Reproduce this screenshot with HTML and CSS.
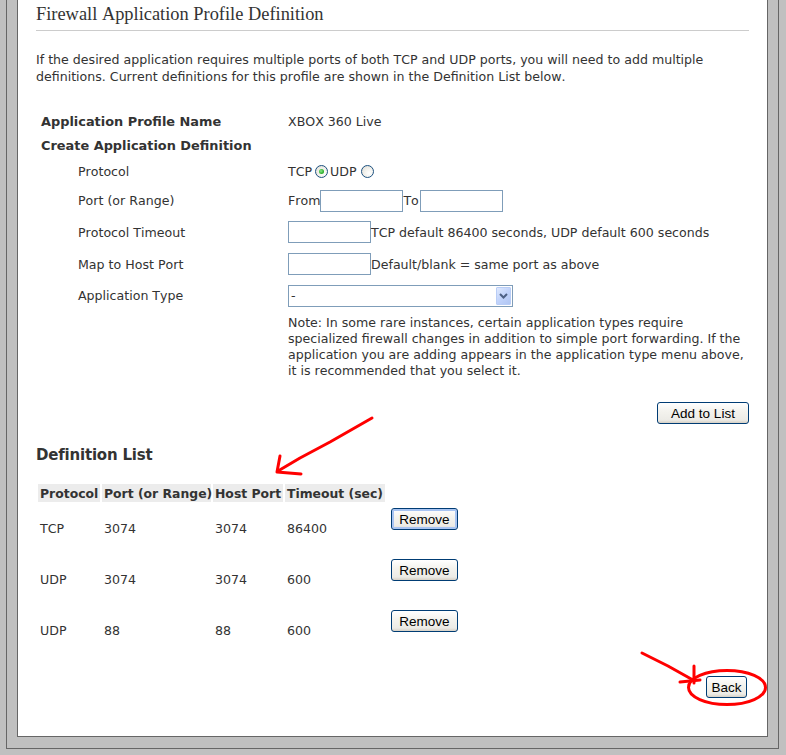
FILE: index.html
```html
<!DOCTYPE html>
<html lang="en">
<head>
    <meta charset="UTF-8">
    <meta name="viewport" content="width=device-width, initial-scale=1.0">
    <title>Firewall Application Profile Definition</title>
    <link rel="stylesheet" href="styles.css">
</head>
<body>
    <div class="frame">
        <div class="panel">
            <h1 class="title">Firewall Application Profile Definition</h1>
            <p class="intro">If the desired application requires multiple ports of both TCP and UDP ports, you will need to add multiple<br>definitions. Current definitions for this profile are shown in the Definition List below.</p>

            <form class="form" id="defForm">
                <div class="row r-name">
                    <span class="label">Application Profile Name</span>
                    <span class="value">XBOX 360 Live</span>
                </div>
                <div class="row r-create">
                    <span class="label">Create Application Definition</span>
                </div>
                <div class="row r-proto">
                    <span class="label sub">Protocol</span>
                    <span class="value">TCP<input type="radio" name="proto" class="radio" checked>UDP<input type="radio" name="proto" class="radio radio-last"></span>
                </div>
                <div class="row r-port">
                    <span class="label sub">Port (or Range)</span>
                    <span class="value">From<input type="text" class="field">To<input type="text" class="field field-to"></span>
                </div>
                <div class="row r-timeout">
                    <span class="label sub">Protocol Timeout</span>
                    <span class="value"><input type="text" class="field">TCP default 86400 seconds, UDP default 600 seconds</span>
                </div>
                <div class="row r-map">
                    <span class="label sub">Map to Host Port</span>
                    <span class="value"><input type="text" class="field">Default/blank = same port as above</span>
                </div>
                <div class="row r-type">
                    <span class="label sub">Application Type</span>
                    <span class="value">
                        <span class="combo">
                            <select class="select">
                                <option>-</option>
                            </select>
                            <span class="combo-btn">
                                <svg width="9" height="6" viewBox="0 0 9 6"><path d="M1 1 L4.5 4.5 L8 1" fill="none" stroke="#4d6185" stroke-width="2"/></svg>
                            </span>
                        </span>
                    </span>
                </div>
            </form>

            <p class="note">Note: In some rare instances, certain application types require<br>specialized firewall changes in addition to simple port forwarding. If the<br>application you are adding appears in the application type menu above,<br>it is recommended that you select it.</p>

            <div class="actions">
                <button type="button" class="btn btn-add">Add to List</button>
            </div>

            <h2 class="heading">Definition List</h2>

            <table class="defs">
                <colgroup>
                    <col class="c-proto">
                    <col class="c-port">
                    <col class="c-host">
                    <col class="c-time">
                    <col class="c-act">
                </colgroup>
                <thead>
                    <tr>
                        <th>Protocol</th>
                        <th>Port (or Range)</th>
                        <th>Host Port</th>
                        <th>Timeout (sec)</th>
                        <th class="blank"></th>
                    </tr>
                </thead>
                <tbody id="defRows"></tbody>
            </table>

            <div class="actions back-row">
                <button type="button" class="btn btn-back">Back</button>
            </div>
        </div>
    </div>

    <svg class="marks" width="786" height="755" viewBox="0 0 786 755">
        <g fill="none" stroke="#ff0000" stroke-width="3" stroke-linecap="round" stroke-linejoin="round">
            <path d="M372 418 L330 442 L300 458 L278 471"/>
            <path d="M280 456 L277 472 L301 474"/>
            <path d="M642 653 L668 666 L693 680"/>
            <path d="M694 666 L694 683"/>
            <path d="M680 682 L700 680"/>
            <ellipse cx="727" cy="687.5" rx="38.5" ry="17"/>
        </g>
    </svg>

    <script>
        const defRows = document.getElementById('defRows');
        const definitions = [
            { protocol: 'TCP', port: '3074', host: '3074', timeout: '86400' },
            { protocol: 'UDP', port: '3074', host: '3074', timeout: '600' },
            { protocol: 'UDP', port: '88', host: '88', timeout: '600' }
        ];

        function renderDefinitions() {
            defRows.innerHTML = '';
            definitions.forEach((def, index) => {
                const row = defRows.insertRow();
                row.innerHTML = `
                    <td>${def.protocol}</td>
                    <td>${def.port}</td>
                    <td>${def.host}</td>
                    <td>${def.timeout}</td>
                    <td class="act"><button type="button" class="btn btn-remove${index === 0 ? ' is-focus' : ''}">Remove</button></td>
                `;
            });
        }

        renderDefinitions();
    </script>
</body>
</html>
```

FILE: styles.css
```css
body {
    margin: 0;
    background-color: #c0c0c0;
    font-family: "DejaVu Sans", Verdana, sans-serif;
    font-size: 12.6px;
    font-kerning: none;
    color: #333;
}
.frame {
    margin: 0 7px 0 6px;
    padding: 0 10px 11px 10px;
    border: 1px solid #666;
    border-top: none;
}
.panel {
    background-color: #fff;
    border: 1px solid #666;
    border-top: none;
    padding: 5px 18px 38px 18px;
}
.title {
    margin: 0;
    padding: 0 0 6px 0;
    border-bottom: 1px solid #ccc;
    font-family: "Liberation Serif", "Times New Roman", serif;
    font-size: 18.4px;
    font-weight: normal;
    line-height: 19px;
    color: #333;
}
.intro {
    margin: 20px 0 0 0;
    line-height: 17px;
}
.form {
    margin: 24px 0 0 5px;
}
.row {
    display: flex;
    align-items: center;
    line-height: 17px;
}
.label {
    width: 247px;
    flex: none;
    font-weight: bold;
    font-size: 12.9px;
}
.label.sub {
    font-weight: normal;
    font-size: 12.6px;
    padding-left: 37px;
    box-sizing: border-box;
}
.value {
    display: flex;
    align-items: center;
    white-space: nowrap;
}
.r-name { height: 24px; }
.r-create { height: 25px; }
.r-proto { height: 27px; }
.r-port { height: 31px; }
.r-timeout { height: 32px; }
.r-map { height: 32px; }
.r-type { height: 31px; }

.radio {
    appearance: none;
    -webkit-appearance: none;
    width: 13px;
    height: 13px;
    margin: 0 2px 0 3px;
    border: 1px solid #1c5180;
    border-radius: 50%;
    box-sizing: border-box;
    background: radial-gradient(circle at 65% 65%, #fff 0, #f2f1ec 45%, #dcd9d1 100%);
    position: relative;
}
.radio:checked::after {
    content: "";
    position: absolute;
    left: 3px;
    top: 3px;
    width: 5px;
    height: 5px;
    border-radius: 50%;
    background: radial-gradient(circle at 40% 40%, #8ce78c 0, #2fb12f 60%, #1d8d1d 100%);
}
.radio-last {
    margin-left: 4px;
}
.field {
    width: 83px;
    height: 22px;
    box-sizing: border-box;
    margin: 0;
    border: 1px solid #7f9db9;
    padding: 0 2px;
    font: inherit;
    background: #fff;
}
.field-to {
    margin-left: 1px;
}
.combo {
    position: relative;
    display: inline-block;
    width: 225px;
    height: 22px;
}
.select {
    appearance: none;
    -webkit-appearance: none;
    width: 225px;
    height: 22px;
    box-sizing: border-box;
    margin: 0;
    border: 1px solid #7f9db9;
    border-radius: 0;
    padding: 0 0 0 2px;
    background: #fff;
    font-family: "DejaVu Sans", Verdana, sans-serif;
    font-size: 12.6px;
    color: #333;
}
.combo-btn {
    position: absolute;
    right: 2px;
    top: 2px;
    width: 15px;
    height: 18px;
    box-sizing: border-box;
    border: 1px solid #b9cdf6;
    border-radius: 1px;
    background: linear-gradient(135deg, #dfe9fe 0, #c1d3fb 50%, #b1c6f3 100%);
    display: flex;
    align-items: center;
    justify-content: center;
}
.note {
    margin: 4px 0 0 252px;
    line-height: 16px;
}
.actions {
    display: flex;
    justify-content: flex-end;
}
.btn {
    height: 22px;
    box-sizing: border-box;
    padding: 0;
    border: 1px solid #003c74;
    border-radius: 3px;
    background: linear-gradient(#ffffff 0, #f4f3ee 40%, #ecebe6 85%, #d6d0c5 100%);
    font-family: "Liberation Sans", Tahoma, Arial, sans-serif;
    font-size: 13.5px;
    color: #000;
    cursor: pointer;
}
.btn-add {
    width: 92px;
    margin-top: 23px;
}
.btn-remove {
    width: 67px;
    display: block;
}
.btn-remove.is-focus {
    box-shadow: inset 0 0 0 2px #a8c4f2;
}
.btn-back {
    width: 41px;
    margin-right: 2px;
}
.heading {
    margin: 22px 0 0 0;
    font-size: 15px;
    letter-spacing: -0.2px;
    line-height: 18px;
    color: #333;
}
.defs {
    margin-top: 18px;
    border-spacing: 2px;
    table-layout: fixed;
    width: 429px;
    margin-left: 0;
}
.c-proto { width: 62px; }
.c-port { width: 109px; }
.c-host { width: 70px; }
.c-time { width: 100px; }
.c-act { width: 78px; }
.defs th {
    height: 18px;
    padding: 0 0 0 2px;
    background-color: #ececec;
    text-align: left;
    font-weight: bold;
    font-size: 12.4px;
    white-space: nowrap;
    overflow: visible;
}
.defs th.blank {
    background: none;
}
.defs td {
    height: 49px;
    padding: 0 0 0 2px;
    vertical-align: middle;
    box-sizing: border-box;
}
.defs td.act {
    vertical-align: top;
    padding: 4px 0 0 4px;
}
.back-row {
    margin-top: 19px;
}
.marks {
    position: absolute;
    left: 0;
    top: 0;
    pointer-events: none;
}
```
